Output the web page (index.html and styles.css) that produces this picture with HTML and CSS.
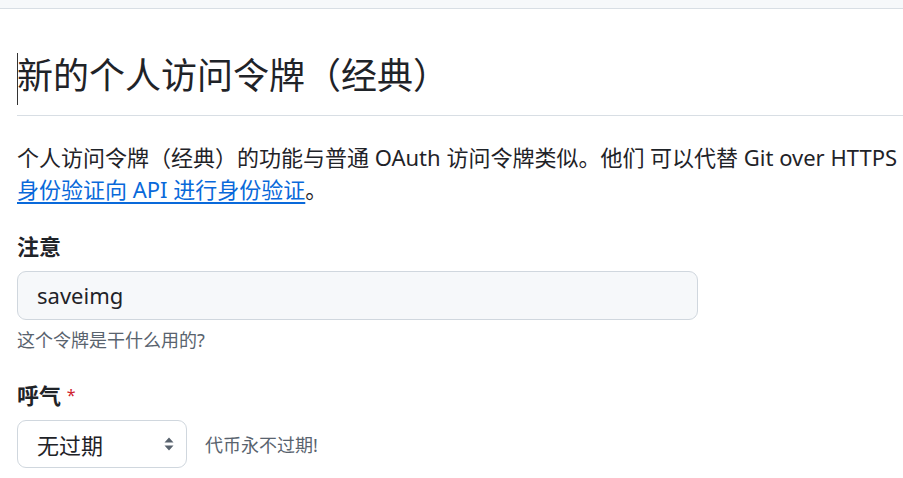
FILE: index.html
```html
<!DOCTYPE html>
<html lang="zh-CN">
<head>
<meta charset="utf-8">
<title>新的个人访问令牌（经典）</title>
<link rel="stylesheet" href="styles.css">
</head>
<body>
<div class="topbar"></div>
<main class="main">
  <h2 class="title"><span class="caret"></span>新的个人访问令牌（经典）</h2>
  <p class="intro">个人访问令牌（经典）的功能与普通 OAuth 访问令牌类似。他们 可以代替 Git over HTTPS<br><a href="#" class="link">身份验证向 API 进行身份验证</a>。</p>
  <div class="field">
    <label class="label">注意</label>
    <div class="input">saveimg</div>
    <p class="hint">这个令牌是干什么用的?</p>
  </div>
  <div class="field">
    <label class="label">呼气 <span class="req">*</span></label>
    <div class="row">
      <div class="select">
        <span>无过期</span>
        <svg class="arrows" width="10" height="14" viewBox="0 0 10 14"><path d="M5 0.5 L9.5 5.5 H0.5 Z M5 13.5 L9.5 8.5 H0.5 Z" fill="#59636e"/></svg>
      </div>
      <span class="note">代币永不过期!</span>
    </div>
  </div>
</main>
</body>
</html>
```
FILE: styles.css
```css
html, body {
  margin: 0;
  padding: 0;
  background: #ffffff;
  overflow: hidden;
}
body {
  font-family: "Noto Sans", "Noto Sans CJK SC", sans-serif;
  color: #1f2328;
}
.topbar {
  height: 8px;
  background: #f6f8fa;
  border-bottom: 1px solid #d8dee4;
}
.main {
  padding-left: 17px;
}
.title {
  margin: 40px 0 0 0;
  padding-bottom: 10px;
  font-size: 36px;
  font-weight: 400;
  line-height: 54px;
  border-bottom: 1px solid #d8dee4;
  white-space: nowrap;
}
.caret {
  display: inline-block;
  width: 1px;
  height: 52px;
  background: #333;
  vertical-align: middle;
  margin-right: -1px;
}
.intro {
  margin: 25px 0 0 0;
  font-size: 22px;
  line-height: 32px;
  white-space: nowrap;
}
.link {
  color: #0969da;
  text-decoration: underline;
  text-underline-offset: 4px;
}
.field {
  margin-top: 25px;
  display: flex;
  flex-direction: column;
  align-items: flex-start;
}
.label {
  font-size: 22px;
  font-weight: 700;
  line-height: 32px;
}
.req {
  color: #cf222e;
  font-size: 16px;
  vertical-align: top;
  font-weight: 400;
}
.input {
  margin-top: 9px;
  box-sizing: border-box;
  width: 681px;
  height: 49px;
  border: 1px solid #d0d7de;
  border-radius: 9px;
  background: #f6f8fa;
  padding-left: 19px;
  font-size: 22px;
  line-height: 47px;
}
.hint {
  margin: 7px 0 0 0;
  font-size: 18px;
  line-height: 27px;
  color: #59636e;
}
.row {
  margin-top: 9px;
  display: flex;
  align-items: center;
  gap: 18px;
}
.select {
  box-sizing: border-box;
  width: 170px;
  height: 48px;
  border: 1px solid #d0d7de;
  border-radius: 9px;
  background: #fff;
  padding: 0 12px 0 19px;
  display: flex;
  align-items: center;
  justify-content: space-between;
  font-size: 22px;
}
.arrows {
  display: block;
}
.note {
  font-size: 18px;
  color: #59636e;
}
```
